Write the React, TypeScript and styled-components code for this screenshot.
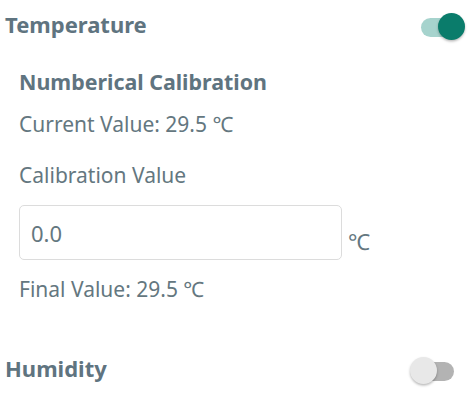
import React from "react";
import styled, { createGlobalStyle } from "styled-components";

const Global = createGlobalStyle`
  html, body { margin: 0; padding: 0; background: #ffffff; }
  body { font-family: "Noto Sans", "Open Sans", sans-serif; color: #607581; }
  * { box-sizing: border-box; }
`;

const Page = styled.div`
  width: 471px;
  height: 415px;
  padding: 0 6px 0 5px;
  overflow: hidden;
`;

const HeaderRow = styled.div<{ $inset?: number; $top?: number }>`
  display: flex;
  justify-content: space-between;
  align-items: center;
  height: 54px;
  margin-top: ${(p) => p.$top ?? 0}px;
  padding-right: ${(p) => p.$inset ?? 0}px;
`;

const SectionTitle = styled.div`
  font-size: 22px;
  font-weight: 700;
  line-height: 30px;
  margin-bottom: 7px;
  color: #5f7480;
`;

const Content = styled.div`
  padding-left: 14px;
  display: flex;
  flex-direction: column;
`;

const SubTitle = styled.div`
  font-size: 21.4px;
  font-weight: 700;
  line-height: 30px;
  margin-top: 13px;
  color: #5f7480;
`;

const Text = styled.div<{ $gap: number }>`
  font-size: 21px;
  line-height: 30px;
  margin-top: ${(p) => p.$gap}px;
  color: #647780;
`;

const InputRow = styled.div`
  display: flex;
  align-items: flex-end;
  margin-top: 15px;
  gap: 6px;
`;

const Field = styled.input`
  width: 323px;
  height: 55px;
  border: 1px solid #dcdcdc;
  border-radius: 5px;
  padding: 0 11px;
  font-family: "Noto Sans", sans-serif;
  font-size: 22px;
  color: #647780;
  background: #fff;
  outline: none;
`;

const Unit = styled.span`
  font-size: 22px;
  line-height: 30px;
  margin-bottom: 4px;
  color: #647780;
`;

const SwitchBox = styled.div`
  position: relative;
  width: 46px;
  height: 28px;
  flex: none;
`;

const Track = styled.div<{ $on: boolean }>`
  position: absolute;
  left: 2px;
  right: 2px;
  top: 5px;
  height: 19px;
  border-radius: 10px;
  background: ${(p) => (p.$on ? "#a6d3cd" : "#b3b3b3")};
`;

const Thumb = styled.div<{ $on: boolean }>`
  position: absolute;
  top: 0;
  ${(p) => (p.$on ? "right: 0;" : "left: 0;")}
  width: 27px;
  height: 27px;
  border-radius: 50%;
  background: ${(p) => (p.$on ? "#0a7c6b" : "#e8e8e8")};
  box-shadow: 0 1.5px 2.5px rgba(0, 0, 0, 0.28);
`;

const Switch: React.FC<{ on: boolean }> = ({ on }) => (
  <SwitchBox>
    <Track $on={on} />
    <Thumb $on={on} />
  </SwitchBox>
);

export default function App() {
  return (
    <>
      <Global />
      <Page>
        <HeaderRow>
          <SectionTitle>Temperature</SectionTitle>
          <Switch on={true} />
        </HeaderRow>
        <Content>
          <SubTitle>Numberical Calibration</SubTitle>
          <Text $gap={12}>Current Value: 29.5 ℃</Text>
          <Text $gap={21}>Calibration Value</Text>
          <InputRow>
            <Field readOnly value="0.0" />
            <Unit>℃</Unit>
          </InputRow>
          <Text $gap={14}>Final Value: 29.5 ℃</Text>
        </Content>
        <HeaderRow $inset={9} $top={40}>
          <SectionTitle>Humidity</SectionTitle>
          <Switch on={false} />
        </HeaderRow>
      </Page>
    </>
  );
}
